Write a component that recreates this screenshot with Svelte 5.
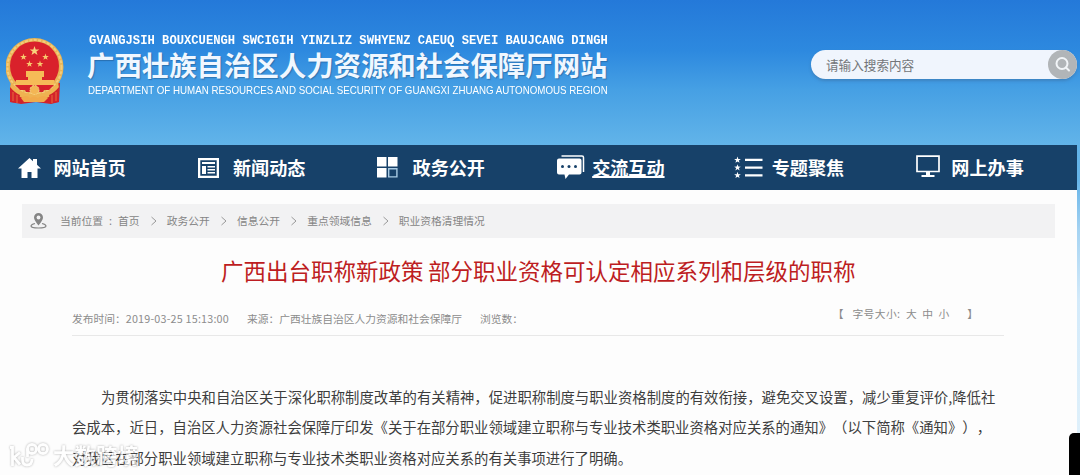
<script lang="ts">
  interface NavItem {
    icon: string;
    label: string;
    active?: boolean;
  }

  const navItems: NavItem[] = [
    { icon: "home", label: "网站首页" },
    { icon: "news", label: "新闻动态" },
    { icon: "grid", label: "政务公开" },
    { icon: "chat", label: "交流互动", active: true },
    { icon: "list", label: "专题聚焦" },
    { icon: "monitor", label: "网上办事" },
  ];

  const crumbs = ["首页", "政务公开", "信息公开", "重点领域信息", "职业资格清理情况"];

  const lines = [
    "为贯彻落实中央和自治区关于深化职称制度改革的有关精神，促进职称制度与职业资格制度的有效衔接，避免交叉设置，减少重复评价,降低社",
    "会成本，近日，自治区人力资源社会保障厅印发《关于在部分职业领域建立职称与专业技术类职业资格对应关系的通知》（以下简称《通知》），",
    "对我区在部分职业领域建立职称与专业技术类职业资格对应关系的有关事项进行了明确。",
  ];

  const star = "M0-5 1.2-1.6 4.8-1.5 1.9.6 3 4 0 2-3 4-1.9.6-4.8-1.5-1.2-1.6Z";
  const smallStars = [
    [17.5, 20],
    [39.5, 20],
    [23.5, 27],
    [34, 27],
  ];

  let keyword = $state("");
</script>

<div class="page">
  <header class="header">
    <svg class="emblem" viewBox="0 0 60 68" width="60" height="68">
      <path d="M5 46 4 65 15 67 30 65 45 67 53 65 54 46Z" fill="#d3222b" />
      <circle cx="28.5" cy="30" r="29" fill="#e9b455" />
      <circle cx="28.5" cy="30" r="27" fill="none" stroke="#f3cd7c" stroke-width="2" stroke-dasharray="3 1.5" />
      <circle cx="28.5" cy="29" r="24.5" fill="#d9212b" />
      <path transform="translate(28.5 14)" d={star} fill="#f8d47c" />
      {#each smallStars as [x, y]}
        <path transform="translate({x} {y}) scale(.7)" d={star} fill="#f8c96d" />
      {/each}
      <path d="M20 34h18v6h-2v3h12v5H10v-5h12v-3h-2Z" fill="#f6bb57" />
      <path d="M9 48h39l-5 5H14Z" fill="#d9212b" />
      <path d="M5 45q10 13 23.5 12Q42 58 52 45l1 6q-8 12-24.5 12T4 51Z" fill="#efb251" />
      <path d="M18 51q5-3 10.5 0 5.5-3 10.5 0l-2 4H20Z" fill="#d3222b" />
      <circle cx="28.5" cy="53" r="4.5" fill="#f3b655" stroke="#f9d886" stroke-dasharray="2 1" />
      <path d="M4 50q5 6 10 8l-2 8-8-1ZM53 50q-5 6-10 8l2 8 8-1Z" fill="#d3222b" />
      <path d="M7 55v9M11 58v8M46 58v8M50 55v9" stroke="#ea6a3a" />
      <path d="M15 61q5-4 9 0 4-3 8 0 5-4 10 0l-4 4H18Z" fill="#f1aa4b" />
    </svg>
    <div class="brand">
      <div class="brand-pinyin">GVANGJSIH BOUXCUENGH SWCIGIH YINZLIZ SWHYENZ CAEUQ SEVEI BAUJCANG DINGH</div>
      <h1>广西壮族自治区人力资源和社会保障厅网站</h1>
      <div class="brand-en">DEPARTMENT OF HUMAN RESOURCES AND SOCIAL SECURITY OF GUANGXI ZHUANG AUTONOMOUS REGION</div>
    </div>
    <div class="search">
      <input type="text" placeholder="请输入搜索内容" bind:value={keyword} />
      <button aria-label="搜索">
        <svg viewBox="0 0 28 28" width="28" height="28" fill="none" stroke="#f2f5f8" stroke-width="2">
          <circle cx="13" cy="13.5" r="5.5" />
          <path d="m17 17.5 3 3" stroke-linecap="round" />
        </svg>
      </button>
    </div>
  </header>

  <div class="main">
    <nav class="nav">
      {#each navItems as item}
        <a class="nav-item" class:active={item.active} href="#{item.icon}">
          <svg viewBox="0 0 28 28" width="28" height="28" fill="#fff">
            {#if item.icon === "home"}
              <path d="M0 14.5 11.5 4 15 7.2V5h4v5.8l4 3.7h-3.5V24h-6v-6h-4v6h-6v-9.5Z" />
            {:else if item.icon === "news"}
              <path d="M0 4h21v20H0Zm2.3 2.3v15.4h16.4V6.3Z" fill-rule="evenodd" />
              <path d="M4 8h13v2H4Zm0 4h4v8H4Zm5.5 0H17v1.5H9.5Zm0 3H17v1.5H9.5Zm0 3H17v1.5H9.5Z" />
            {:else if item.icon === "grid"}
              <path d="M0 3h9.5v9.5H0Zm11 0h9.5v9.5H11ZM0 14h9.5v9.5H0Z" />
              <path d="M11.7 14.7h8.2v8.2h-8.2Z" fill="none" stroke="#a9cbe4" stroke-width="1.4" />
            {:else if item.icon === "chat"}
              <path d="M4.5 2H25q1.5 0 1.5 1.5V18" fill="none" stroke="#fff" stroke-width="1.5" />
              <path d="M2 4.5h20.5q2 0 2 2v12q0 2-2 2H12L8.5 25 7.5 20.5H2q-2 0-2-2v-12q0-2 2-2Z" />
              {#each [5.5, 12, 18.5] as cx}
                <circle {cx} cy="12.5" r="1.5" fill="#174169" />
              {/each}
            {:else if item.icon === "list"}
              <path d="M9 4.8h17.5V7H9Zm0 7.8h17.5v2.2H9Zm0 7.7h17.5v2.2H9Z" />
              {#each [6, 13.7, 21.3] as y}
                <path transform="translate(1.5 {y}) scale(.7)" d={star} />
              {/each}
            {:else}
              <path d="M1 2.2h22v15.3H1Z" fill="none" stroke="#fff" stroke-width="1.7" />
              <path d="M10 18h4v3h4.5v2h-13v-2H10Z" />
            {/if}
          </svg>
          <span>{item.label}</span>
        </a>
      {/each}
    </nav>

    <div class="crumbs">
      <svg class="pin" viewBox="0 0 18 18" width="18" height="18" fill="none" stroke="#858585">
        <path d="M8.5 13.5Q4 8 4 5.5a4.5 4.5 0 0 1 9 0Q13 8 8.5 13.5Z" fill="#858585" stroke="none" />
        <circle cx="8.5" cy="5.5" r="1.9" fill="#f2f2f3" stroke="none" />
        <path d="M5 11.5Q1 12.5 1 14q0 2 7.5 2t7.5-2q0-1.5-4-2.5" stroke-width="1.2" />
      </svg>
      <span class="crumbs-label">当前位置</span>
      <span class="colon">:</span>
      {#each crumbs as crumb, i}
        {#if i > 0}
          <svg class="sep" viewBox="0 0 6 10" width="6" height="10" fill="none" stroke="#999">
            <path d="m.5 1 4.5 4L.5 9" />
          </svg>
        {/if}
        <a href="#crumb-{i}">{crumb}</a>
      {/each}
    </div>

    <article class="article">
      <h2>广西出台职称新政策 部分职业资格可认定相应系列和层级的职称</h2>
      <div class="meta">
        <span class="meta-time">发布时间：<span class="date">2019-03-25 15:13:00</span></span>
        <span class="meta-source">来源：广西壮族自治区人力资源和社会保障厅</span>
        <span>浏览数：</span>
        <div class="font-size">
          <span class="bracket">【</span>
          <span class="size-label">字号大小:</span>
          <a href="#large">大</a>
          <a href="#medium">中</a>
          <a href="#small">小</a>
          <span class="bracket close">】</span>
        </div>
      </div>
      <div class="content">
        {#each lines as line, i}
          <div class="line" class:indent={i === 0}>{line}</div>
        {/each}
      </div>
    </article>
  </div>

  <div class="watermark">
    <svg viewBox="0 0 42 28" width="42" height="28" fill="none" stroke="#fff" stroke-width="2.8">
      <path d="M1 6.5h2.5V25M11 11.5l-6 5 6 7" />
      <path d="M13.5 16v2.5q0 5.500 4.500 5.500 5 0 5-6" />
      <path d="M18.500 16V7.500" />
      <circle cx="23" cy="8" r="4.500" />
      <circle cx="34" cy="8" r="4.500" />
    </svg>
    <span>大数跨境</span>
  </div>
  <div class="side-tab"></div>
</div>

<style>
  :global(body) {
    margin: 0;
    overflow: hidden;
  }

  .page {
    position: relative;
    width: 1080px;
    height: 475px;
    overflow: hidden;
    background: linear-gradient(#2479d9 0, #61b3e9 145px, #65b4e9 180px, #a5d3f2 230px, #d3eafa 300px, #e2f2fb 475px);
    font-family: "Liberation Sans", "Noto Sans CJK SC", sans-serif;
    text-spacing-trim: space-all;
    white-space: nowrap;
  }

  a {
    color: inherit;
    text-decoration: none;
  }

  /* === Header === */
  .header {
    display: flex;
    align-items: flex-start;
    box-sizing: border-box;
    height: 145px;
    padding: 34px 3px 0 6px;
    background: linear-gradient(#2479d9, #2d89df 35%, #46a0e4 62%, #62b4e9);
    color: #fff;
  }

  .emblem {
    margin-top: 3px;
  }

  .brand {
    width: 530px;
    margin-left: 21px;
  }

  .brand-pinyin {
    margin-left: 2px;
    font: bold 13.5px/14px "Liberation Mono", monospace;
    transform: scaleX(0.902);
    transform-origin: left;
  }

  .brand h1 {
    margin: 0;
    font: bold 27.4px/32px "Noto Sans CJK SC", sans-serif;
    color: #f0f7ff;
    text-shadow: 1px 1px 1px rgba(30, 80, 130, 0.5);
  }

  .brand-en {
    margin-left: 1px;
    font-size: 10.4px;
    line-height: 21px;
    transform: scaleX(0.938);
    transform-origin: left;
  }

  .search {
    display: flex;
    box-sizing: border-box;
    width: 266px;
    height: 29px;
    margin: 16px 0 0 auto;
    border-radius: 15px;
    background: #f0f5fd;
    box-shadow: 0 2px 3px rgba(60, 110, 160, 0.5);
  }

  .search input {
    flex: 1;
    min-width: 0;
    padding: 0 0 1px 15px;
    border: 0;
    outline: none;
    background: none;
    font: 12.6px "Noto Sans CJK SC", sans-serif;
  }

  .search input::placeholder {
    color: #737579;
  }

  .search button {
    width: 29px;
    height: 29px;
    padding: 0;
    border: 0;
    border-radius: 50%;
    background: #b1b5b8;
  }

  /* === Nav === */
  .main {
    width: 1077px;
    height: 330px;
    background: #fdfdfd;
  }

  .nav {
    display: flex;
    height: 45px;
    padding-left: 18px;
    background: #174169;
    color: #fff;
  }

  .nav-item {
    display: flex;
    flex: 0 0 179.6px;
    align-items: center;
    gap: 7.4px;
    font: bold 18.1px/45px "Noto Sans CJK SC", sans-serif;
  }

  .nav-item svg {
    overflow: visible;
  }

  .nav-item.active span {
    text-decoration: underline;
    text-decoration-thickness: 2px;
    text-underline-offset: 1px;
    text-decoration-skip-ink: none;
  }

  /* === Breadcrumbs === */
  .crumbs {
    display: flex;
    align-items: center;
    box-sizing: border-box;
    width: 1033px;
    height: 34px;
    margin: 14px 0 0 22px;
    padding-left: 8px;
    background: #f2f2f3;
    color: #858585;
    font: 10.75px/34px "Noto Sans CJK SC", sans-serif;
  }

  .crumbs-label {
    margin-left: 12px;
  }

  .colon {
    width: 9px;
    padding-left: 6px;
  }

  .sep {
    margin: 0 10.2px 0 11px;
  }

  /* === Article === */
  .article {
    width: 932px;
    margin-left: 72px;
  }

  .article h2 {
    margin: 0;
    padding: 12px 0 1px 149px;
    font: 22.5px/40px "Noto Sans CJK SC", sans-serif;
    color: #bd1d22;
    word-spacing: -0.5px;
  }

  .meta {
    display: flex;
    box-sizing: border-box;
    height: 45px;
    padding-top: 17px;
    border-bottom: 1px solid #e8e8e8;
    color: #8c8c8c;
    font: 10.75px/22px "Noto Sans CJK SC", sans-serif;
  }

  .meta-time {
    width: 175px;
  }

  .meta-source {
    width: 233px;
  }

  .date {
    letter-spacing: 0.2px;
  }

  .font-size {
    display: flex;
    margin: -5px 26px 0 auto;
  }

  .font-size a {
    margin-left: 5.5px;
  }

  .size-label {
    margin-left: 9px;
    letter-spacing: 0.4px;
  }

  .bracket.close {
    margin-left: 18px;
  }

  .content {
    padding-top: 46px;
    color: #3d3d3d;
    font: 14.36px/30.4px "Noto Sans CJK SC", sans-serif;
  }

  .line.indent {
    padding-left: 29px;
  }

  /* === Overlays === */
  .watermark {
    position: absolute;
    left: 9px;
    bottom: 6px;
    display: flex;
    align-items: center;
    gap: 2px;
    color: #fff;
    font: bold 21.5px/28px "Noto Sans CJK SC", sans-serif;
    filter: drop-shadow(0 0 1px rgba(90, 90, 90, 0.7));
    opacity: 0.68;
  }

  .side-tab {
    position: absolute;
    right: 0;
    bottom: 0;
    width: 11px;
    height: 42px;
    border-top-left-radius: 5px;
    background: #000;
  }
</style>
